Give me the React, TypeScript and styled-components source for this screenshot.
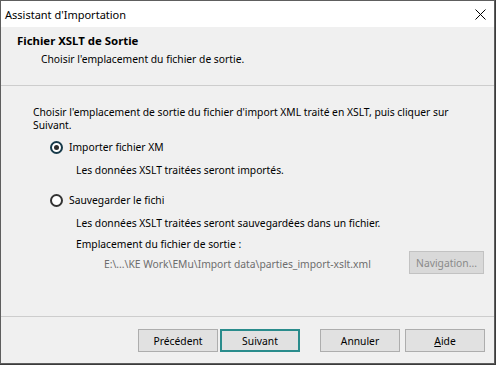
import React from "react";
import styled, { createGlobalStyle } from "styled-components";

const Global = createGlobalStyle`
  html, body { margin: 0; padding: 0; background: #3c3c3c; }
  body { width: 496px; height: 365px; overflow: hidden; }
  * { box-sizing: border-box; }
`;

const FONT = `"Noto Sans", "Liberation Sans", Arial, sans-serif`;

const Window = styled.div`
  width: 495px;
  height: 364px;
  border: 1px solid #5e5e5e;
  display: flex;
  flex-direction: column;
  font-family: ${FONT};
  font-size: 10.3px;
  color: #000;
  background: #f0f0f0;
`;

const TitleBar = styled.div`
  height: 26px;
  background: #fff;
  display: flex;
  align-items: center;
  padding: 0 8px 0 4px;
  font-size: 11px;
`;

const TitleText = styled.span`
  flex: 1;
  line-height: 15px;
`;

const CloseIcon = styled.svg`
  width: 11px;
  height: 11px;
  display: block;
`;

const Header = styled.div`
  height: 59px;
  border-bottom: 1px solid #cdcdcd;
  padding: 6px 0 0 16px;
`;

const HeaderTitle = styled.div`
  font-weight: 700;
  font-size: 11.4px;
  line-height: 15px;
`;

const HeaderSub = styled.div`
  line-height: 15px;
  margin-top: 4px;
  padding-left: 24px;
`;

const Body = styled.div`
  flex: 1;
  border-bottom: 1px solid #cdcdcd;
  padding: 20px 10px 0 32px;
  display: flex;
  flex-direction: column;
`;

const Intro = styled.div`
  line-height: 13px;
  white-space: nowrap;
`;

const RadioRow = styled.div<{ $mt: number }>`
  display: flex;
  align-items: center;
  height: 15px;
  margin-top: ${(p) => p.$mt}px;
  padding-left: 17px;
`;

const RadioCircle = styled.span<{ $checked?: boolean }>`
  width: 13px;
  height: 13px;
  border-radius: 50%;
  border: 2px solid ${(p) => (p.$checked ? "#173a4a" : "#333333")};
  background: #fff;
  position: relative;
  flex: none;
  &::after {
    content: "";
    display: ${(p) => (p.$checked ? "block" : "none")};
    position: absolute;
    left: 2px;
    top: 2px;
    width: 5px;
    height: 5px;
    border-radius: 50%;
    background: #2e2e2e;
  }
`;

const RadioLabel = styled.span`
  margin-left: 6px;
  width: 95px;
  overflow: hidden;
  white-space: nowrap;
  line-height: 15px;
`;

const Desc = styled.div<{ $mt: number }>`
  line-height: 15px;
  margin-top: ${(p) => p.$mt}px;
  padding-left: 43px;
  white-space: nowrap;
`;

const PathRow = styled.div`
  display: flex;
  align-items: center;
  margin-top: -1px;
  padding-left: 71px;
  height: 23px;
`;

const PathText = styled.span`
  color: #6d6d6d;
  flex: 1;
  white-space: nowrap;
  padding-top: 3px;
`;

const Button = styled.button<{ $focused?: boolean }>`
  width: ${(p) => (p.$w ? p.$w : 80)}px;
  height: 23px;
  padding: 0;
  margin: 0;
  font-family: ${FONT};
  font-size: 10.3px;
  color: #000;
  background: #e1e1e1;
  border: ${(p) => (p.$focused ? "2px solid #2a8c8c" : "1px solid #adadad")};
  border-radius: 0;
  flex: none;
  &:disabled {
    background: #d9d9d9;
    border-color: #c2c2c2;
    color: #8a8a8a;
  }
` as any;

const Footer = styled.div`
  height: 46px;
  display: flex;
  justify-content: flex-end;
  padding: 12px 9px 0 0;
`;

const Gap = styled.span<{ $w: number }>`
  width: ${(p) => p.$w}px;
  flex: none;
`;

const U = styled.span`
  text-decoration: underline;
`;

export default function App() {
  return (
    <>
      <Global />
      <Window>
        <TitleBar>
          <TitleText>Assistant d'Importation</TitleText>
          <CloseIcon viewBox="0 0 11 11">
            <path d="M0.5 0.5 L10.5 10.5 M10.5 0.5 L0.5 10.5" stroke="#000" strokeWidth="1" />
          </CloseIcon>
        </TitleBar>
        <Header>
          <HeaderTitle>Fichier XSLT de Sortie</HeaderTitle>
          <HeaderSub>Choisir l'emplacement du fichier de sortie.</HeaderSub>
        </Header>
        <Body>
          <Intro>
            Choisir l'emplacement de sortie du fichier d'import XML traité en XSLT, puis cliquer sur
            <br />
            Suivant.
          </Intro>
          <RadioRow $mt={8}>
            <RadioCircle $checked />
            <RadioLabel>Importer fichier XML</RadioLabel>
          </RadioRow>
          <Desc $mt={8}>Les données XSLT traitées seront importés.</Desc>
          <RadioRow $mt={15}>
            <RadioCircle />
            <RadioLabel>Sauvegarder le fichier de sortie</RadioLabel>
          </RadioRow>
          <Desc $mt={8}>Les données XSLT traitées seront sauvegardées dans un fichier.</Desc>
          <Desc $mt={6}>Emplacement du fichier de sortie :</Desc>
          <PathRow>
            <PathText>E:\...\KE Work\EMu\Import data\parties_import-xslt.xml</PathText>
            <Button $w={75} disabled>
              Navigation...
            </Button>
          </PathRow>
        </Body>
        <Footer>
          <Button>Précédent</Button>
          <Gap $w={2} />
          <Button $focused>Suivant</Button>
          <Gap $w={20} />
          <Button>Annuler</Button>
          <Gap $w={5} />
          <Button>
            <U>A</U>ide
          </Button>
        </Footer>
      </Window>
    </>
  );
}
